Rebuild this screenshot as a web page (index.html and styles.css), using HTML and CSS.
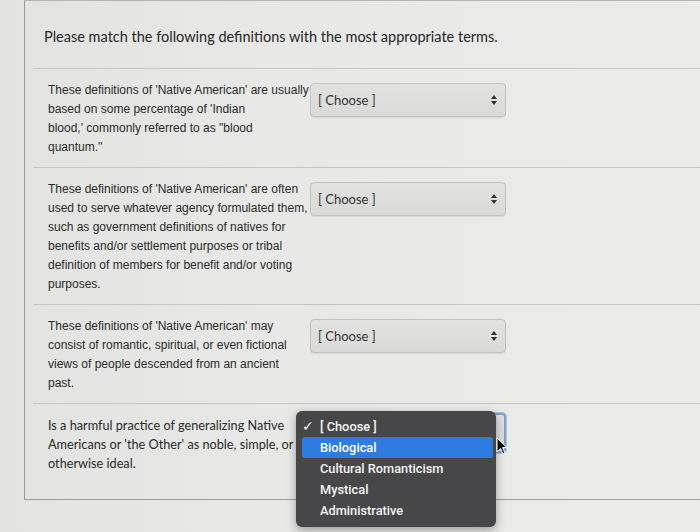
FILE: index.html
```html
<!DOCTYPE html>
<html lang="en">
<head>
<meta charset="utf-8">
<title>Matching question</title>
<link rel="stylesheet" href="styles.css">
</head>
<body>
<div class="card">
  <p class="title">Please match the following definitions with the most appropriate terms.</p>
  <div class="rows">
    <div class="row">
      <div class="qtext">These definitions of 'Native American' are usually based on some percentage of 'Indian<br>blood,' commonly referred to as "blood quantum."</div>
      <div class="select"><span>[ Choose ]</span><span class="arrows"><svg width="6" height="10" viewBox="0 0 6 10"><path d="M3 0L6 4H0Z M3 10L6 6H0Z" fill="#333"/></svg></span></div>
    </div>
    <div class="row">
      <div class="qtext">These definitions of 'Native American' are often used to serve whatever agency formulated them, such as government definitions of natives for benefits and/or settlement purposes or tribal definition of members for benefit and/or voting purposes.</div>
      <div class="select"><span>[ Choose ]</span><span class="arrows"><svg width="6" height="10" viewBox="0 0 6 10"><path d="M3 0L6 4H0Z M3 10L6 6H0Z" fill="#333"/></svg></span></div>
    </div>
    <div class="row">
      <div class="qtext">These definitions of 'Native American' may consist of romantic, spiritual, or even fictional views of people descended from an ancient<br>past.</div>
      <div class="select"><span>[ Choose ]</span><span class="arrows"><svg width="6" height="10" viewBox="0 0 6 10"><path d="M3 0L6 4H0Z M3 10L6 6H0Z" fill="#333"/></svg></span></div>
    </div>
    <div class="row last">
      <div class="qtext lato">Is a harmful practice of generalizing Native Americans or 'the Other' as noble, simple, or otherwise ideal.</div>
      <div class="select focused"><span class="covered">[ Choose ]</span><span class="arrows"><svg width="6" height="10" viewBox="0 0 6 10"><path d="M3 0L6 4H0Z M3 10L6 6H0Z" fill="#333"/></svg></span>
        <ul class="menu">
          <li><span class="check">✓</span>[ Choose ]</li>
          <li class="hl">Biological</li>
          <li>Cultural Romanticism</li>
          <li>Mystical</li>
          <li>Administrative</li>
        </ul>
        <svg class="cursor" width="12" height="18" viewBox="0 0 12 18"><path d="M1 1V15L4.5 11.5L7 17L9 16L6.6 10.6H11Z" fill="#111" stroke="#fff" stroke-width="1"/></svg>
      </div>
    </div>
  </div>
</div>
</body>
</html>
```
FILE: styles.css
```css
html, body {
  margin: 0;
  padding: 0;
}
body {
  width: 700px;
  height: 532px;
  overflow: hidden;
  background: linear-gradient(90deg, #e3e3e1 0%, #e8e8e6 40%, #ebebe9 100%);
  font-family: "Liberation Sans", Arial, sans-serif;
  color: #2c2c2c;
}
.card {
  margin-left: 24px;
  width: 700px;
  height: 500px;
  border: 1px solid #9c9c9a;
  border-right: none;
  border-top-color: #b4b4b2;
  box-sizing: border-box;
}
.title {
  margin: 0;
  padding: 26px 0 0 19px;
  height: 41px;
  font-family: Lato, "Open Sans", sans-serif;
  font-size: 14.5px;
  line-height: 20px;
  color: #262626;
}
.rows {
  margin-left: 8px;
}
.row {
  display: flex;
  border-top: 1px solid #c6c6c4;
  padding: 12px 0 10px 15px;
}
.row.last {
  padding-bottom: 24px;
}
.qtext {
  width: 262px;
  flex-shrink: 0;
  font-size: 12px;
  line-height: 19px;
  color: #2a2a2a;
}
.qtext.lato {
  font-family: Lato, "Open Sans", sans-serif;
  font-size: 12.7px;
  width: 258px;
  margin-right: 4px;
}
.select {
  position: relative;
  margin-top: 2px;
  width: 196px;
  height: 34px;
  box-sizing: border-box;
  border: 1px solid #c2c2c0;
  border-radius: 4px;
  background: linear-gradient(#e2e2e0, #d9d9d7);
  box-shadow: 0 1px 1px rgba(0,0,0,0.08);
  display: flex;
  align-items: center;
  justify-content: space-between;
  padding: 0 8px 0 7px;
  font-family: Lato, "Open Sans", sans-serif;
  font-size: 13px;
  color: #333;
}
.arrows {
  display: flex;
  align-items: center;
}
.select.focused {
  margin-top: -3px;
  height: 40px;
  border: 2px solid #7d9fd0;
  box-shadow: 0 0 0 1px #a9c0e2;
}
.covered {
  visibility: hidden;
}
.menu {
  position: absolute;
  left: -16px;
  top: -4px;
  width: 200px;
  margin: 0;
  padding: 5px 0 6px 0;
  list-style: none;
  background: #474749;
  border-radius: 6px;
  box-shadow: 0 3px 10px rgba(0,0,0,0.35);
  font-family: Roboto, "Liberation Sans", sans-serif;
  font-weight: 500;
  font-size: 12.8px;
  color: #f4f4f4;
}
.menu li {
  height: 21px;
  line-height: 21px;
  padding-left: 18px;
  margin: 0 3px 0 6px;
  position: relative;
  border-radius: 3px;
}
.menu li.hl {
  background: #2f7ce0;
  color: #fff;
}
.check {
  position: absolute;
  left: 0;
  top: 0;
  font-size: 14px;
}
.cursor {
  position: absolute;
  left: 184px;
  top: 22px;
}
```
